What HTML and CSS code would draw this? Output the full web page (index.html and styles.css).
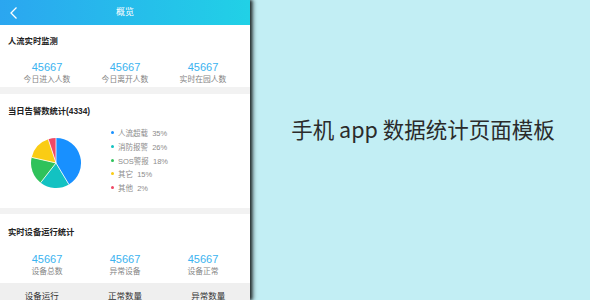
FILE: index.html
```html
<!DOCTYPE html>
<html>
  <head>
    <link rel="stylesheet" href="styles.css">
  </head>
  <body>
    <div class="phone">
      <div class="topbar">
        <svg class="back" width="10" height="14" viewBox="0 0 10 14">
          <polyline points="7.5,1.5 2,7 7.5,12.5" fill="none" stroke="#fff" stroke-width="1.3"/>
        </svg>
        <span class="topbar-title">概览</span>
      </div>

      <div class="panel panel-flow">
        <h2 class="panel-title">人流实时监测</h2>
        <div class="stats">
          <div class="stat"><div class="num">45667</div><div class="label">今日进入人数</div></div>
          <div class="stat"><div class="num">45667</div><div class="label">今日离开人数</div></div>
          <div class="stat"><div class="num">45667</div><div class="label">实时在园人数</div></div>
        </div>
      </div>

      <div class="panel panel-alarm">
        <h2 class="panel-title">当日告警数统计(4334)</h2>
        <div class="chart">
          <svg class="pie" width="52" height="52" viewBox="-26 -26 52 52">
            <!-- slices clockwise from 12 o'clock -->
            <path d="M0 0 L0 -25 A25 25 0 0 1 12.88 21.43 Z" fill="#1890ff"/>
            <path d="M0 0 L12.88 21.43 A25 25 0 0 1 -15.39 19.70 Z" fill="#13c2c2"/>
            <path d="M0 0 L-15.39 19.70 A25 25 0 0 1 -24.36 -5.62 Z" fill="#2fc25b"/>
            <path d="M0 0 L-24.36 -5.62 A25 25 0 0 1 -7.73 -23.78 Z" fill="#facc14"/>
            <path d="M0 0 L-7.73 -23.78 A25 25 0 0 1 0 -25 Z" fill="#f04864"/>
            <g stroke="#fff" stroke-width="0.8">
              <line x1="0" y1="0" x2="0" y2="-25"/>
              <line x1="0" y1="0" x2="12.88" y2="21.43"/>
              <line x1="0" y1="0" x2="-15.39" y2="19.70"/>
              <line x1="0" y1="0" x2="-24.36" y2="-5.62"/>
              <line x1="0" y1="0" x2="-7.73" y2="-23.78"/>
            </g>
          </svg>
          <ul class="legend">
            <li><i class="dot dot-blue"></i>人流超载&nbsp;&nbsp;35%</li>
            <li><i class="dot dot-teal"></i>消防报警&nbsp;&nbsp;26%</li>
            <li><i class="dot dot-green"></i>SOS警报&nbsp;&nbsp;18%</li>
            <li><i class="dot dot-yellow"></i>其它&nbsp;&nbsp;15%</li>
            <li><i class="dot dot-red"></i>其他&nbsp;&nbsp;2%</li>
          </ul>
        </div>
      </div>

      <div class="panel panel-device">
        <h2 class="panel-title">实时设备运行统计</h2>
        <div class="stats">
          <div class="stat"><div class="num">45667</div><div class="label">设备总数</div></div>
          <div class="stat"><div class="num">45667</div><div class="label">异常设备</div></div>
          <div class="stat"><div class="num">45667</div><div class="label">设备正常</div></div>
        </div>
      </div>

      <div class="table-head">
        <span>设备运行</span>
        <span>正常数量</span>
        <span>异常数量</span>
      </div>
    </div>

    <div class="caption">
      <p>手机 app 数据统计页面模板</p>
    </div>
  </body>
</html>
```

FILE: styles.css
```css
body {
  margin: 0;
  padding: 0;
  width: 590px;
  height: 300px;
  overflow: hidden;
  display: flex;
  background-color: #c2eef4;
  font-family: "Liberation Sans", "Noto Sans CJK SC", sans-serif;
}

.phone {
  width: 250px;
  height: 300px;
  flex-shrink: 0;
  overflow: hidden;
  background-color: #f2f2f2;
  box-shadow: 2px 0 3px rgba(0, 0, 0, 0.75), 4px 0 4px rgba(0, 0, 0, 0.3);
  position: relative;
  z-index: 1;
}

.topbar {
  height: 25px;
  display: flex;
  align-items: center;
  justify-content: center;
  position: relative;
  background: linear-gradient(90deg, #2ba6f0, #21d1e6);
}

.back {
  position: absolute;
  left: 9px;
  top: 6px;
}

.topbar-title {
  color: #fff;
  font-size: 9px;
  line-height: 25px;
}

.panel {
  background-color: #fff;
  padding: 0 8px;
}

.panel-flow {
  padding-top: 10px;
  padding-bottom: 2px;
  margin-bottom: 7px;
}

.panel-alarm {
  padding-top: 11px;
  height: 103px;
  margin-bottom: 6px;
}

.panel-device {
  padding-top: 12px;
  padding-bottom: 6px;
}

.panel-title {
  margin: 0;
  font-size: 8.3px;
  line-height: 12px;
  font-weight: bold;
  color: #222;
}

.stats {
  display: flex;
  margin-top: 14px;
}

.panel-device .stats {
  margin-top: 15px;
}

.stat {
  flex: 1;
  text-align: center;
}

.num {
  font-size: 11px;
  line-height: 13px;
  color: #3bb3f0;
}

.label {
  font-size: 7.8px;
  line-height: 11px;
  color: #858585;
}

.chart {
  display: flex;
  align-items: center;
  height: 91px;
}

.pie {
  margin-left: 22px;
  margin-top: 1px;
}

.legend {
  list-style: none;
  margin: 0 0 5px 29px;
  padding: 0;
}

.legend li {
  display: flex;
  align-items: center;
  height: 13.7px;
  font-size: 7.5px;
  color: #8c8c8c;
}

.dot {
  width: 3px;
  height: 3px;
  border-radius: 50%;
  margin-right: 4px;
}

.dot-blue { background-color: #1890ff; }
.dot-teal { background-color: #13c2c2; }
.dot-green { background-color: #2fc25b; }
.dot-yellow { background-color: #facc14; }
.dot-red { background-color: #f04864; }

.table-head {
  display: flex;
  background-color: #efefef;
  padding-top: 7px;
  height: 30px;
}

.table-head span {
  flex: 1;
  text-align: center;
  font-size: 8.5px;
  line-height: 12px;
  color: #333;
}

.caption {
  flex: 1;
  display: flex;
  align-items: center;
  justify-content: center;
  padding-left: 6px;
  padding-bottom: 44px;
}

.caption p {
  margin: 0;
  font-family: "Noto Sans CJK SC", sans-serif;
  font-size: 21.5px;
  color: #2b2b2b;
}
```
